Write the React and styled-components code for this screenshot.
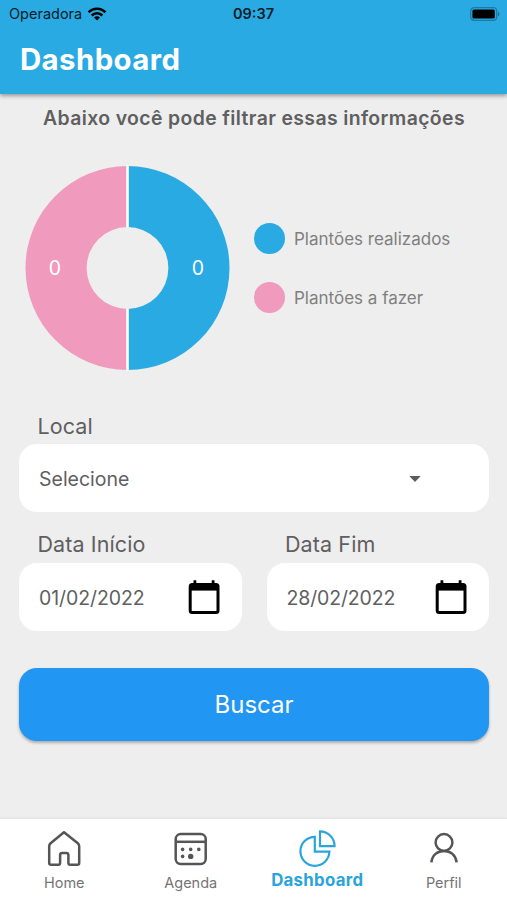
import React from "react";
import styled, { createGlobalStyle } from "styled-components";

const GlobalStyle = createGlobalStyle`
  * { box-sizing: border-box; }
  html, body { margin: 0; padding: 0; background: #eeeeee; }
  body, button { font-family: Inter, "Liberation Sans", sans-serif; }
`;

const Screen = styled.div`
  width: 507px;
  height: 900px;
  display: flex;
  flex-direction: column;
  background: #eeeeee;
  color: #5f5f5f;
  overflow: hidden;
`;

const Header = styled.header`
  height: 94px;
  flex: none;
  background: #29aae3;
  box-shadow: 0 2px 4px rgba(0, 0, 0, 0.36);
`;

const StatusBar = styled.div`
  height: 28px;
  padding: 0 7px 0 9px;
  display: grid;
  grid-template-columns: 1fr auto 1fr;
  align-items: center;
  color: #0b1c26;
`;

const Carrier = styled.div`
  height: 28px;
  padding-bottom: 1px;
  display: flex;
  align-items: center;
  gap: 5px;
  font-size: 14.5px;
`;

const Clock = styled.div`
  height: 26px;
  line-height: 26px;
  padding-right: 2px;
  font-size: 14.5px;
  font-weight: 600;
`;

const BatterySlot = styled.div`
  height: 28px;
  padding-bottom: 1px;
  display: flex;
  align-items: center;
  justify-content: flex-end;
`;

const Title = styled.h1`
  margin: 0;
  padding-left: 20px;
  height: 64px;
  line-height: 64px;
  font-size: 29.4px;
  font-weight: 700;
  letter-spacing: 0.4px;
  color: #ffffff;
`;

const Content = styled.main`
  flex: 1;
  padding: 0 18px 0 19px;
  display: flex;
  flex-direction: column;
`;

const Intro = styled.p`
  margin: 11px 0 0;
  line-height: 26px;
  font-size: 19.4px;
  font-weight: 600;
  letter-spacing: 0.38px;
  text-align: center;
  white-space: nowrap;
`;

const ChartRow = styled.section`
  margin-top: 34px;
  height: 206px;
  padding-left: 5px;
  display: flex;
  align-items: center;
  gap: 23px;
`;

const Legend = styled.ul`
  margin: 0;
  padding: 0;
  list-style: none;
  display: flex;
  flex-direction: column;
  gap: 28px;
`;

const LegendItem = styled.li`
  height: 31px;
  display: flex;
  align-items: center;
  gap: 9px;
  font-size: 17px;
  color: #7f7f7f;
`;

const Swatch = styled.span`
  width: 31px;
  height: 31px;
  border-radius: 50%;
  background: ${(p) => p.$color};
`;

const Form = styled.form`
  margin-top: 38px;
  display: flex;
  flex-direction: column;
`;

const Columns = styled.div`
  margin-top: 16px;
  display: grid;
  grid-template-columns: 1fr 1fr;
  gap: 25px;
`;

const Field = styled.div`
  display: flex;
  flex-direction: column;
`;

const Label = styled.label`
  height: 35px;
  line-height: ${(p) => p.$line || "33px"};
  padding-left: 18.5px;
  font-size: 21.5px;
  letter-spacing: 0.1px;
`;

const Control = styled.div`
  height: 68px;
  padding: 1px ${(p) => p.$end}px 0 20px;
  display: flex;
  align-items: center;
  justify-content: space-between;
  border-radius: 18px;
  background: #ffffff;
  font-size: 19.5px;
  letter-spacing: ${(p) => p.$track || "0"};
`;

const SubmitButton = styled.button`
  margin-top: 37px;
  height: 73px;
  padding: 0;
  border: 0;
  border-radius: 18px;
  background: #2196f3;
  box-shadow: 0 2px 3px rgba(0, 0, 0, 0.28);
  color: #ffffff;
  font-size: 24px;
`;

const TabBar = styled.nav`
  height: 81px;
  padding-left: 1px;
  flex: none;
  display: grid;
  grid-template-columns: repeat(4, 1fr);
  background: #ffffff;
  box-shadow: 0 -1px 2px rgba(0, 0, 0, 0.06);
`;

const Tab = styled.a`
  display: flex;
  flex-direction: column;
  align-items: center;
  padding-top: 10px;
  color: ${(p) => (p.$active ? "#29a5dc" : "#555555")};
`;

const TabLabel = styled.span`
  height: 24px;
  line-height: ${(p) => (p.$active ? "21px" : "25px")};
  margin-top: 3px;
  font-size: ${(p) => (p.$active ? "16.8px" : "14.5px")};
  font-weight: ${(p) => (p.$active ? 700 : 400)};
  letter-spacing: ${(p) => (p.$active ? "0.3px" : "0")};
  color: ${(p) => (p.$active ? "#29a5dc" : "#757575")};
`;

const WifiIcon = () => (
  <svg width="20" height="16" viewBox="0 0 20 16" fill="none" stroke="#000" strokeWidth="2.6">
    <path d="M1.6 6.3a11.7 11.7 0 0 1 16.8 0" />
    <path d="M4.7 9.5a7.4 7.4 0 0 1 10.6 0" />
    <path d="M10 14.6 7 11.6a4.2 4.2 0 0 1 6 0z" fill="#000" stroke="none" />
  </svg>
);

const BatteryIcon = () => (
  <svg width="30" height="14" viewBox="0 0 30 14">
    <rect x="0.7" y="0.7" width="26" height="12.6" rx="3.4" fill="none" stroke="#1b7ba6" strokeWidth="1.3" />
    <rect x="2.4" y="2.4" width="22.4" height="9.2" rx="1.6" fill="#000" />
    <path d="M27.9 4.7c2 .8 2 3.8 0 4.6z" fill="#1b6f94" />
  </svg>
);

const CalendarIcon = () => (
  <svg width="32" height="35" viewBox="0 0 32 35">
    <path d="M6.9 0.2v5M25.1 0.2v5" stroke="#000" strokeWidth="2.8" />
    <rect x="2.2" y="4.6" width="27.8" height="27.8" rx="2" fill="none" stroke="#000" strokeWidth="3" />
    <path d="M2.2 4.6h27.8v6H2.2z" fill="#000" />
  </svg>
);

const CaretIcon = () => (
  <svg width="12" height="6" viewBox="0 0 12 6">
    <path d="M0.3 0h11.4L6 6z" fill="#5c5c5c" />
  </svg>
);

const HomeIcon = () => (
  <svg width="36" height="38" viewBox="0 0 36 38" fill="none" stroke="currentColor" strokeWidth="2.5" strokeLinejoin="round">
    <path d="M18 3.3 31.8 14.2Q33.2 15.4 33.2 17.2V34Q33.2 35.8 31.4 35.8H24.2Q22.4 35.8 22.4 34V26Q22.4 23.9 20.3 23.9H16.2Q14.1 23.9 14.1 26V34Q14.1 35.8 12.3 35.8H5Q3.2 35.8 3.2 34V17.2Q3.2 15.4 4.6 14.2Z" />
  </svg>
);

const AgendaIcon = () => (
  <svg width="36" height="38" viewBox="0 0 36 38" fill="none" stroke="currentColor" strokeWidth="2.5">
    <rect x="2.7" y="5.1" width="30" height="30" rx="5" />
    <path d="M2.7 12.8h30" />
    <g fill="currentColor" stroke="none">
      <circle cx="9.6" cy="20.4" r="1.8" />
      <circle cx="17.7" cy="20.4" r="1.8" />
      <circle cx="25.8" cy="20.4" r="1.8" />
      <circle cx="9.6" cy="27.4" r="1.8" />
      <circle cx="17.7" cy="27.4" r="2.7" />
    </g>
  </svg>
);

const PieIcon = () => (
  <svg width="38" height="38" viewBox="0 0 38 38" fill="none" stroke="currentColor" strokeWidth="2.2">
    <path d="M16.8 7.8A14.5 14.5 0 1 0 31.4 22.6H16.8Z" />
    <path d="M22 2.4V17.2H36.6A14.8 14.8 0 0 0 22 2.4Z" />
  </svg>
);

const PersonIcon = () => (
  <svg width="36" height="38" viewBox="0 0 36 38" fill="none" stroke="currentColor" strokeWidth="2.5">
    <circle cx="18" cy="13.5" r="8.4" />
    <path d="M5.4 33.4C6.2 26 11.5 21.9 18 21.9S29.8 26 30.6 33.4" />
  </svg>
);

const SliceValue = styled.text`
  fill: #ffffff;
  font-size: 19.5px;
  text-anchor: middle;
`;

const DonutChart = () => (
  <svg width="207" height="206" viewBox="0 0 207 206">
    <path d="M103.5 1A102 102 0 0 1 103.5 205V143.9A40.9 40.9 0 0 0 103.5 62.1Z" fill="#29aae3" />
    <path d="M103.5 1A102 102 0 0 0 103.5 205V143.9A40.9 40.9 0 0 1 103.5 62.1Z" fill="#f09bbd" />
    <path d="M103.5 0.8V62.3M103.5 143.7V205.2" stroke="#fff" strokeWidth="2.6" />
    <SliceValue x="31" y="110">0</SliceValue>
    <SliceValue x="174" y="110">0</SliceValue>
  </svg>
);

const tabs = [
  { label: "Home", Icon: HomeIcon },
  { label: "Agenda", Icon: AgendaIcon },
  { label: "Dashboard", Icon: PieIcon, active: true },
  { label: "Perfil", Icon: PersonIcon },
];

export default function App() {
  return (
    <>
      <GlobalStyle />
      <Screen>
        <Header>
          <StatusBar>
            <Carrier>
              Operadora
              <WifiIcon />
            </Carrier>
            <Clock>09:37</Clock>
            <BatterySlot>
              <BatteryIcon />
            </BatterySlot>
          </StatusBar>
          <Title>Dashboard</Title>
        </Header>
        <Content>
          <Intro>Abaixo você pode filtrar essas informações</Intro>
          <ChartRow>
            <DonutChart />
            <Legend>
              <LegendItem>
                <Swatch $color="#29aae3" />
                Plantões realizados
              </LegendItem>
              <LegendItem>
                <Swatch $color="#f09bbd" />
                Plantões a fazer
              </LegendItem>
            </Legend>
          </ChartRow>
          <Form>
            <Field>
              <Label $line="34px">Local</Label>
              <Control $end={68}>
                Selecione
                <CaretIcon />
              </Control>
            </Field>
            <Columns>
              <Field>
                <Label>Data Início</Label>
                <Control $end={22} $track="-0.1px">
                  01/02/2022
                  <CalendarIcon />
                </Control>
              </Field>
              <Field>
                <Label>Data Fim</Label>
                <Control $end={22} $track="-0.15px">
                  28/02/2022
                  <CalendarIcon />
                </Control>
              </Field>
            </Columns>
            <SubmitButton type="button">Buscar</SubmitButton>
          </Form>
        </Content>
        <TabBar>
          {tabs.map(({ label, Icon, active }) => (
            <Tab key={label} $active={active}>
              <Icon />
              <TabLabel $active={active}>{label}</TabLabel>
            </Tab>
          ))}
        </TabBar>
      </Screen>
    </>
  );
}
